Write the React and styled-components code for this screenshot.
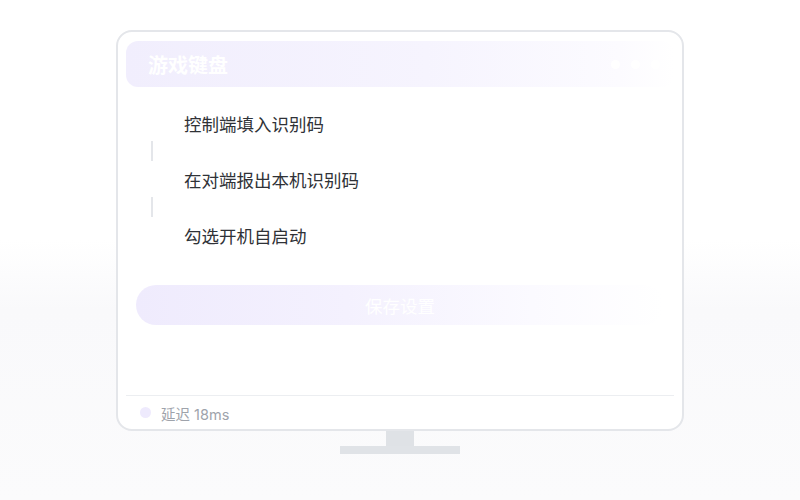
import styled, { createGlobalStyle } from "styled-components";

const GlobalStyle = createGlobalStyle`
  html, body {
    margin: 0;
    padding: 0;
  }
  body {
    width: 800px;
    height: 500px;
    overflow: hidden;
    background: linear-gradient(180deg, #ffffff 0%, #ffffff 48%, #f9f9fb 62%, #fbfbfc 100%);
    font-family: Inter, "Noto Sans CJK SC", "Noto Sans", sans-serif;
  }
`;

const Stage = styled.div`
  display: flex;
  flex-direction: column;
  align-items: center;
  padding-top: 30px;
`;

const Monitor = styled.div`
  box-sizing: border-box;
  width: 568px;
  height: 401px;
  border: 2px solid #e4e6ea;
  border-radius: 16px;
  background: #fff;
  padding: 9px 8px 0;
  display: flex;
  flex-direction: column;
`;

const Header = styled.div`
  height: 46px;
  border-radius: 12px;
  background: linear-gradient(90deg, #f1eefd 0%, #f6f4fe 55%, #fcfbff 90%, #ffffff 100%);
  display: flex;
  align-items: center;
  justify-content: space-between;
  padding: 0 14px 0 22px;
`;

const Title = styled.h1`
  margin: 0;
  font-size: 20px;
  font-weight: 700;
  color: #ffffff;
`;

const Dots = styled.div`
  display: flex;
  gap: 11px;
`;

const Dot = styled.span`
  width: 9px;
  height: 9px;
  border-radius: 50%;
  background: #ffffff;
`;

const Steps = styled.ol`
  list-style: none;
  margin: 18px 0 0;
  padding: 0 0 0 8px;
`;

const Step = styled.li`
  display: flex;
  align-items: center;
  height: 36px;
  gap: 14px;
`;

const Num = styled.span`
  width: 36px;
  height: 36px;
  border-radius: 50%;
  background: #ffffff;
  color: #ffffff;
  font-size: 14px;
  display: flex;
  align-items: center;
  justify-content: center;
`;

const StepText = styled.span`
  font-size: 17.5px;
  color: #2f3237;
`;

const Connector = styled.li`
  width: 2px;
  height: 20px;
  margin-left: 17px;
  background: #e4e6ea;
`;

const SaveButton = styled.button`
  margin: 32px 10px 0;
  height: 40px;
  border: none;
  border-radius: 20px;
  background: linear-gradient(90deg, #efebfd 0%, #f4f1fe 40%, #fbfaff 75%, #ffffff 100%);
  color: #ffffff;
  font-family: inherit;
  font-size: 17.5px;
  cursor: pointer;
`;

const Spacer = styled.div`
  flex: 1;
`;

const Footer = styled.div`
  border-top: 1.5px solid #eceef1;
  height: 33px;
  display: flex;
  align-items: center;
  gap: 10px;
  padding-left: 14px;
`;

const StatusDot = styled.span`
  width: 11px;
  height: 11px;
  border-radius: 50%;
  background: #eeeafd;
`;

const Latency = styled.span`
  font-size: 14.5px;
  color: #9ea3ab;
  padding-top: 2px;
`;

const Neck = styled.div`
  width: 28px;
  height: 15px;
  background: #dfe2e6;
`;

const Base = styled.div`
  width: 120px;
  height: 8px;
  background: #e0e3e7;
`;

const steps = ["控制端填入识别码", "在对端报出本机识别码", "勾选开机自启动"];

export default function App() {
  return (
    <>
      <GlobalStyle />
      <Stage>
        <Monitor>
          <Header>
            <Title>游戏键盘</Title>
            <Dots>
              <Dot />
              <Dot />
              <Dot />
            </Dots>
          </Header>
          <Steps>
            {steps.flatMap((s, i) => [
              i > 0 && <Connector key={"c" + i} />,
              <Step key={s}>
                <Num>{i + 1}</Num>
                <StepText>{s}</StepText>
              </Step>,
            ])}
          </Steps>
          <SaveButton>保存设置</SaveButton>
          <Spacer />
          <Footer>
            <StatusDot />
            <Latency>延迟 18ms</Latency>
          </Footer>
        </Monitor>
        <Neck />
        <Base />
      </Stage>
    </>
  );
}
